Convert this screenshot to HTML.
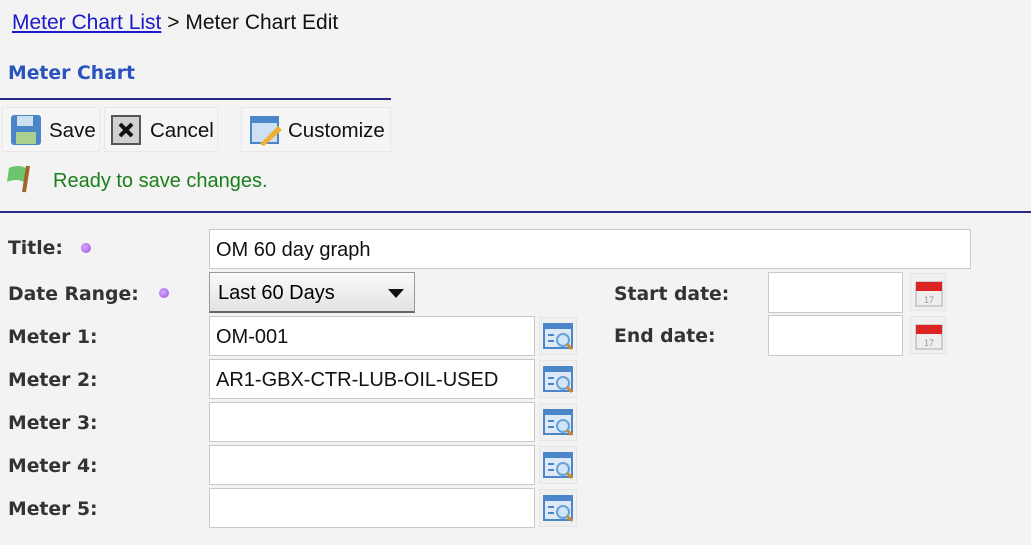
<!DOCTYPE html>
<html><head><style>
body{margin:0;width:1031px;height:545px;background:#f3f3f3;font-family:"Liberation Sans",sans-serif;position:relative;overflow:hidden}
.a{position:absolute}
.lbl{position:absolute;left:8px;font-weight:bold;font-size:18.8px;color:#333;font-family:"DejaVu Sans",sans-serif}
.inp{position:absolute;background:#fff;border:1px solid #c9c9c9;box-sizing:border-box;font-size:20px;color:#111;padding-left:6px;line-height:40px}
.btn{position:absolute;top:107px;height:45px;background:#f5f5f5;border:1px solid #e8e8e8;box-sizing:border-box;font-size:20.5px;color:#111;line-height:45px}
.dot{position:absolute;width:10px;height:10px;border-radius:50%;background:radial-gradient(circle at 40% 40%,#d9a8ff,#9a4ee0)}
.lk{position:absolute;left:539px;width:38px;height:38px;background:#f0f0f0;border:1px solid #e6e6e6;box-sizing:border-box}
.cal{position:absolute;left:910px;width:36px;height:38px;background:#f0f0f0;border:1px solid #e6e6e6;box-sizing:border-box}
</style></head><body>
<div class="a" style="left:12px;top:11px;font-size:21px;color:#111"><span style="color:#1a1acc;text-decoration:underline">Meter Chart List</span> &gt; Meter Chart Edit</div>
<div class="a" style="left:8px;top:63px;font-size:18.8px;font-weight:bold;color:#2a52be;font-family:'DejaVu Sans',sans-serif">Meter Chart</div>
<div class="a" style="left:0;top:98px;width:391px;height:2px;background:#262a8a"></div>
<div class="btn" style="left:2px;width:98px"><svg class="a" style="left:7px;top:6px" width="32" height="32"><rect x="1" y="1" width="30" height="30" rx="3" fill="#4a86c8"/><rect x="7" y="2" width="16" height="10" fill="#cfe0f2"/><rect x="6" y="18" width="20" height="12" fill="#a9d08e"/></svg><span style="position:absolute;left:46px">Save</span></div>
<div class="btn" style="left:104px;width:114px"><svg class="a" style="left:6px;top:7px" width="30" height="30"><rect x="1" y="1" width="28" height="28" fill="#d0d0d0" stroke="#555" stroke-width="2"/><path d="M9 9L21 21M21 9L9 21" stroke="#111" stroke-width="4"/></svg><span style="position:absolute;left:45px">Cancel</span></div>
<div class="btn" style="left:241px;width:150px"><svg class="a" style="left:8px;top:6px" width="32" height="32"><rect x="1" y="3" width="27" height="26" fill="#cfe0f2" stroke="#4a86c8" stroke-width="2"/><rect x="1" y="3" width="27" height="6" fill="#4a86c8"/><path d="M10 30L28 12L32 16L14 32Z" fill="#f0b030"/></svg><span style="position:absolute;left:46px">Customize</span></div>
<svg class="a" style="left:6px;top:164px" width="32" height="30"><path d="M3 4Q12 0 20 4L18 18Q10 14 1 18Z" fill="#6cc46c"/><path d="M22 2L18 28" stroke="#a0642a" stroke-width="4"/></svg>
<div class="a" style="left:53px;top:170px;font-size:20px;color:#1a7f1a">Ready to save changes.</div>
<div class="a" style="left:0;top:211px;width:1031px;height:2px;background:#262a8a"></div>

<div class="lbl" style="top:238px">Title:</div><div class="dot" style="left:81px;top:243px"></div>
<div class="inp" style="left:209px;top:229px;width:762px;height:40px">OM 60 day graph</div>
<div class="lbl" style="top:284px">Date Range:</div><div class="dot" style="left:159px;top:288px"></div>
<div class="a" style="left:209px;top:272px;width:206px;height:41px;box-sizing:border-box;border:1px solid #999;border-bottom:2px solid #666;background:linear-gradient(#fafafa,#e2e2e2);font-size:20px;line-height:40px;padding-left:8px">Last 60 Days<svg class="a" style="right:10px;top:16px" width="16" height="9"><path d="M0 0H16L8 9Z" fill="#111"/></svg></div>
<div class="a" style="left:614px;top:284px;font-weight:bold;font-size:18.8px;color:#333;font-family:'DejaVu Sans',sans-serif">Start date:</div>
<div class="inp" style="left:768px;top:272px;width:135px;height:41px"></div>
<div class="a" style="left:614px;top:326px;font-weight:bold;font-size:18.8px;color:#333;font-family:'DejaVu Sans',sans-serif">End date:</div>
<div class="inp" style="left:768px;top:315px;width:135px;height:41px"></div>
<div class="cal" style="top:273px"><svg class="a" style="left:4px;top:5px" width="28" height="28"><rect x="1" y="3" width="26" height="24" fill="#eee" stroke="#aaa"/><rect x="1" y="3" width="26" height="9" fill="#d22"/><text x="9" y="24" font-size="9" fill="#999" font-family="Liberation Sans">17</text></svg></div>
<div class="cal" style="top:316px"><svg class="a" style="left:4px;top:5px" width="28" height="28"><rect x="1" y="3" width="26" height="24" fill="#eee" stroke="#aaa"/><rect x="1" y="3" width="26" height="9" fill="#d22"/><text x="9" y="24" font-size="9" fill="#999" font-family="Liberation Sans">17</text></svg></div>

<div class="lbl" style="top:327px">Meter 1:</div><div class="inp" style="left:209px;top:316px;width:326px;height:40px">OM-001</div>
<div class="lbl" style="top:370px">Meter 2:</div><div class="inp" style="left:209px;top:359px;width:326px;height:40px">AR1-GBX-CTR-LUB-OIL-USED</div>
<div class="lbl" style="top:413px">Meter 3:</div><div class="inp" style="left:209px;top:402px;width:326px;height:40px"></div>
<div class="lbl" style="top:456px">Meter 4:</div><div class="inp" style="left:209px;top:445px;width:326px;height:40px"></div>
<div class="lbl" style="top:499px">Meter 5:</div><div class="inp" style="left:209px;top:488px;width:326px;height:40px"></div>

<div class="lk" style="top:317px"></div><div class="lk" style="top:360px"></div><div class="lk" style="top:403px"></div><div class="lk" style="top:446px"></div><div class="lk" style="top:489px"></div>
<svg class="a" style="left:0;top:0" width="1031" height="545">
<defs><g id="lu"><rect x="0" y="0" width="28" height="24" fill="#dde9f6" stroke="#4a86c8" stroke-width="2"/><rect x="0" y="0" width="28" height="5" fill="#4a86c8"/><path d="M4 11H10M4 17H10" stroke="#4a86c8" stroke-width="2"/><circle cx="19" cy="16" r="6" fill="#cfe6f8" stroke="#6aa0d8" stroke-width="2"/><path d="M23 20L28 25" stroke="#d08a30" stroke-width="3"/></g></defs>
<use href="#lu" x="544" y="324"/><use href="#lu" x="544" y="367"/><use href="#lu" x="544" y="410"/><use href="#lu" x="544" y="453"/><use href="#lu" x="544" y="496"/>
</svg>
</body></html>
